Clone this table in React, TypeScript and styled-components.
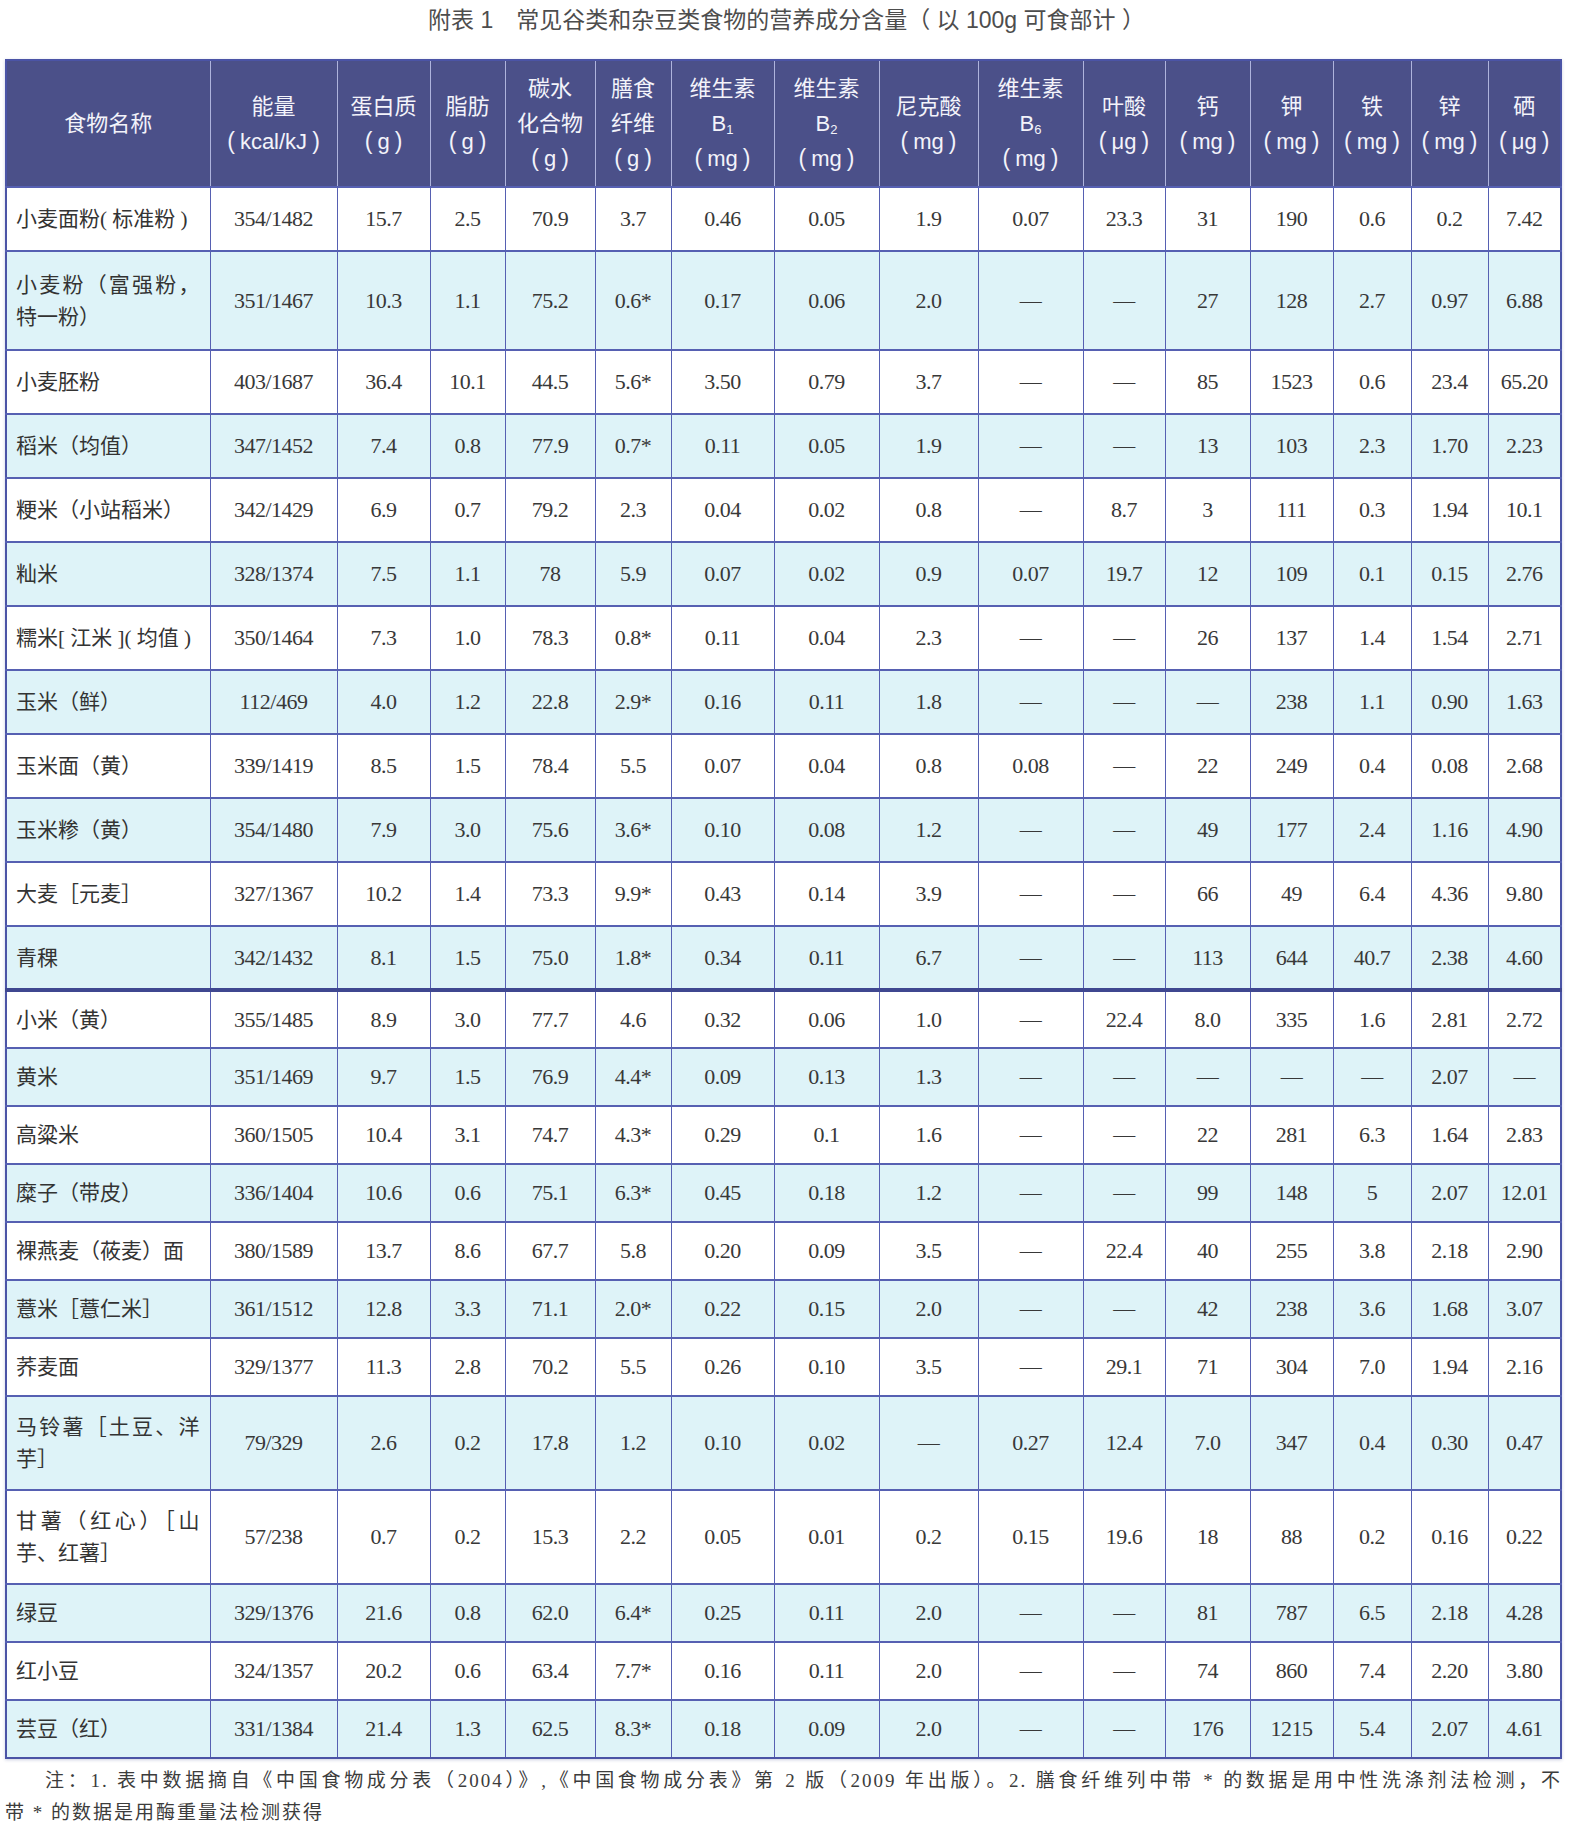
import React from 'react';
import styled, { createGlobalStyle } from 'styled-components';

const GlobalStyle = createGlobalStyle`
  html, body {
    margin: 0;
    padding: 0;
    background: #ffffff;
  }
  body {
    font-family: "Liberation Serif", "Noto Sans CJK SC", serif;
    color: #333333;
  }
`;

type Row = string[];

// 名称 + 15 列数值
const groupA: { cells: Row; tall?: boolean }[] = [
  { cells: ['小麦面粉( 标准粉 )', '354/1482', '15.7', '2.5', '70.9', '3.7', '0.46', '0.05', '1.9', '0.07', '23.3', '31', '190', '0.6', '0.2', '7.42'] },
  { cells: ['小麦粉（富强粉，特一粉）', '351/1467', '10.3', '1.1', '75.2', '0.6*', '0.17', '0.06', '2.0', '—', '—', '27', '128', '2.7', '0.97', '6.88'], tall: true },
  { cells: ['小麦胚粉', '403/1687', '36.4', '10.1', '44.5', '5.6*', '3.50', '0.79', '3.7', '—', '—', '85', '1523', '0.6', '23.4', '65.20'] },
  { cells: ['稻米（均值）', '347/1452', '7.4', '0.8', '77.9', '0.7*', '0.11', '0.05', '1.9', '—', '—', '13', '103', '2.3', '1.70', '2.23'] },
  { cells: ['粳米（小站稻米）', '342/1429', '6.9', '0.7', '79.2', '2.3', '0.04', '0.02', '0.8', '—', '8.7', '3', '111', '0.3', '1.94', '10.1'] },
  { cells: ['籼米', '328/1374', '7.5', '1.1', '78', '5.9', '0.07', '0.02', '0.9', '0.07', '19.7', '12', '109', '0.1', '0.15', '2.76'] },
  { cells: ['糯米[ 江米 ]( 均值 )', '350/1464', '7.3', '1.0', '78.3', '0.8*', '0.11', '0.04', '2.3', '—', '—', '26', '137', '1.4', '1.54', '2.71'] },
  { cells: ['玉米（鲜）', '112/469', '4.0', '1.2', '22.8', '2.9*', '0.16', '0.11', '1.8', '—', '—', '—', '238', '1.1', '0.90', '1.63'] },
  { cells: ['玉米面（黄）', '339/1419', '8.5', '1.5', '78.4', '5.5', '0.07', '0.04', '0.8', '0.08', '—', '22', '249', '0.4', '0.08', '2.68'] },
  { cells: ['玉米糁（黄）', '354/1480', '7.9', '3.0', '75.6', '3.6*', '0.10', '0.08', '1.2', '—', '—', '49', '177', '2.4', '1.16', '4.90'] },
  { cells: ['大麦［元麦］', '327/1367', '10.2', '1.4', '73.3', '9.9*', '0.43', '0.14', '3.9', '—', '—', '66', '49', '6.4', '4.36', '9.80'] },
  { cells: ['青稞', '342/1432', '8.1', '1.5', '75.0', '1.8*', '0.34', '0.11', '6.7', '—', '—', '113', '644', '40.7', '2.38', '4.60'] },
];

const groupB: { cells: Row; tall?: boolean }[] = [
  { cells: ['小米（黄）', '355/1485', '8.9', '3.0', '77.7', '4.6', '0.32', '0.06', '1.0', '—', '22.4', '8.0', '335', '1.6', '2.81', '2.72'] },
  { cells: ['黄米', '351/1469', '9.7', '1.5', '76.9', '4.4*', '0.09', '0.13', '1.3', '—', '—', '—', '—', '—', '2.07', '—'] },
  { cells: ['高粱米', '360/1505', '10.4', '3.1', '74.7', '4.3*', '0.29', '0.1', '1.6', '—', '—', '22', '281', '6.3', '1.64', '2.83'] },
  { cells: ['糜子（带皮）', '336/1404', '10.6', '0.6', '75.1', '6.3*', '0.45', '0.18', '1.2', '—', '—', '99', '148', '5', '2.07', '12.01'] },
  { cells: ['裸燕麦（莜麦）面', '380/1589', '13.7', '8.6', '67.7', '5.8', '0.20', '0.09', '3.5', '—', '22.4', '40', '255', '3.8', '2.18', '2.90'] },
  { cells: ['薏米［薏仁米］', '361/1512', '12.8', '3.3', '71.1', '2.0*', '0.22', '0.15', '2.0', '—', '—', '42', '238', '3.6', '1.68', '3.07'] },
  { cells: ['荞麦面', '329/1377', '11.3', '2.8', '70.2', '5.5', '0.26', '0.10', '3.5', '—', '29.1', '71', '304', '7.0', '1.94', '2.16'] },
  { cells: ['马铃薯［土豆、洋芋］', '79/329', '2.6', '0.2', '17.8', '1.2', '0.10', '0.02', '—', '0.27', '12.4', '7.0', '347', '0.4', '0.30', '0.47'], tall: true },
  { cells: ['甘薯（红心）［山芋、红薯］', '57/238', '0.7', '0.2', '15.3', '2.2', '0.05', '0.01', '0.2', '0.15', '19.6', '18', '88', '0.2', '0.16', '0.22'], tall: true },
  { cells: ['绿豆', '329/1376', '21.6', '0.8', '62.0', '6.4*', '0.25', '0.11', '2.0', '—', '—', '81', '787', '6.5', '2.18', '4.28'] },
  { cells: ['红小豆', '324/1357', '20.2', '0.6', '63.4', '7.7*', '0.16', '0.11', '2.0', '—', '—', '74', '860', '7.4', '2.20', '3.80'] },
  { cells: ['芸豆（红）', '331/1384', '21.4', '1.3', '62.5', '8.3*', '0.18', '0.09', '2.0', '—', '—', '176', '1215', '5.4', '2.07', '4.61'] },
];

const colWidths = [204, 127, 93, 75, 90, 76, 103, 105, 99, 105, 82, 85, 83, 78, 77, 73];

// 单位行：括号与文字之间留出空隙
const Unit: React.FC<{ children: React.ReactNode }> = ({ children }) => (
  <UnitLine>
    <Paren>(</Paren>
    {children}
    <Paren>)</Paren>
  </UnitLine>
);

const headers: React.ReactNode[] = [
  <>食物名称</>,
  <>能量<Unit>kcal/kJ</Unit></>,
  <>蛋白质<Unit>g</Unit></>,
  <>脂肪<Unit>g</Unit></>,
  <>碳水<br />化合物<Unit>g</Unit></>,
  <>膳食<br />纤维<Unit>g</Unit></>,
  <>维生素<br />B<sub>1</sub><Unit>mg</Unit></>,
  <>维生素<br />B<sub>2</sub><Unit>mg</Unit></>,
  <>尼克酸<Unit>mg</Unit></>,
  <>维生素<br />B<sub>6</sub><Unit>mg</Unit></>,
  <>叶酸<Unit>μg</Unit></>,
  <>钙<Unit>mg</Unit></>,
  <>钾<Unit>mg</Unit></>,
  <>铁<Unit>mg</Unit></>,
  <>锌<Unit>mg</Unit></>,
  <>硒<Unit>μg</Unit></>,
];

const Page = styled.div`
  width: 1570px;
  padding: 7px 8px 12px 5px;
  box-sizing: border-box;
`;

const Title = styled.h1`
  margin: 0 0 25px;
  font-family: "Liberation Sans", "Noto Sans CJK SC", sans-serif;
  font-weight: 400;
  font-size: 23px;
  line-height: 27px;
  color: #4d4d4d;
  text-align: center;
  padding-left: 6px;
`;

const Table = styled.table`
  width: 1556px;
  table-layout: fixed;
  border-collapse: collapse;
  border: 2px solid #4b54a6;
  box-shadow: 0 1px 3px rgba(60, 70, 140, 0.25);
`;

const HeadRow = styled.tr`
  height: 127px;
  background: #4b5089;
`;

const HeadCell = styled.th`
  padding: 0;
  border-left: 1px solid #aeb3dc;
  color: #f3f3fa;
  font-family: "Liberation Sans", "Noto Sans CJK SC", sans-serif;
  font-weight: 400;
  font-size: 22px;
  line-height: 35px;
  text-align: center;
  vertical-align: middle;
  white-space: nowrap;

  &:first-child {
    border-left: none;
  }

  sub {
    font-size: 13px;
    vertical-align: -3px;
    line-height: 0;
  }
`;

const UnitLine = styled.span`
  display: block;
`;

const Paren = styled.span`
  font-family: "Liberation Sans", sans-serif;
  font-size: 23px;
  font-weight: 300;
  margin: 0 5px;
`;

const BodyRow = styled.tr<{ $shade: boolean; $h: number; $sep?: boolean }>`
  height: ${(p) => p.$h}px;
  background: ${(p) => (p.$shade ? '#def3f8' : '#ffffff')};

  td {
    border-top: ${(p) => (p.$sep ? '4px solid #3f4790' : '2px solid #5660b2')};
  }
`;

const NameCell = styled.td`
  padding: 0 10px 0 9px;
  border-left: 1.5px solid #5660b2;
  font-family: "Liberation Serif", "Noto Sans CJK SC", serif;
  font-size: 21px;
  line-height: 32px;
  color: #333333;
  text-align: justify;
  vertical-align: middle;
`;

const Cell = styled.td`
  padding: 0;
  border-left: 1.5px solid #5660b2;
  font-family: "Liberation Serif", "Noto Sans CJK SC", serif;
  font-size: 22px;
  color: #383838;
  text-align: center;
  vertical-align: middle;
  white-space: nowrap;
  letter-spacing: -0.5px;
`;

const Note = styled.div`
  margin-top: 6px;
  font-family: "Liberation Serif", "Noto Sans CJK SC", serif;
  font-size: 19px;
  line-height: 32px;
  color: #3c3c3c;
`;

const NoteLine = styled.div<{ $indent?: boolean; $fill?: boolean }>`
  padding-left: ${(p) => (p.$indent ? '40px' : '0')};
  text-align: ${(p) => (p.$fill ? 'justify' : 'left')};
  text-align-last: ${(p) => (p.$fill ? 'justify' : 'auto')};
  letter-spacing: 2px;
`;

const renderRows = (rows: { cells: Row; tall?: boolean }[], base: number, tall: number, sepFirst: boolean) =>
  rows.map((r, i) => (
    <BodyRow key={r.cells[0]} $shade={i % 2 === 1} $h={r.tall ? tall : base} $sep={sepFirst && i === 0}>
      <NameCell>{r.cells[0]}</NameCell>
      {r.cells.slice(1).map((c, j) => (
        <Cell key={j}>{c}</Cell>
      ))}
    </BodyRow>
  ));

const App: React.FC = () => {
  return (
    <Page>
      <GlobalStyle />
      <Title>附表 1　常见谷类和杂豆类食物的营养成分含量（ 以 100g 可食部计 ）</Title>
      <Table>
        <colgroup>
          {colWidths.map((w, i) => (
            <col key={i} style={{ width: w }} />
          ))}
        </colgroup>
        <thead>
          <HeadRow>
            {headers.map((h, i) => (
              <HeadCell key={i}>{h}</HeadCell>
            ))}
          </HeadRow>
        </thead>
        <tbody>
          {renderRows(groupA, 64, 99, false)}
          {renderRows(groupB, 58, 94, true)}
        </tbody>
      </Table>
      <Note>
        <NoteLine $indent $fill>
          注：1. 表中数据摘自《中国食物成分表（2004）》,《中国食物成分表》第 2 版（2009 年出版）。2. 膳食纤维列中带 * 的数据是用中性洗涤剂法检测，不
        </NoteLine>
        <NoteLine>带 * 的数据是用酶重量法检测获得</NoteLine>
      </Note>
    </Page>
  );
};

export default App;
